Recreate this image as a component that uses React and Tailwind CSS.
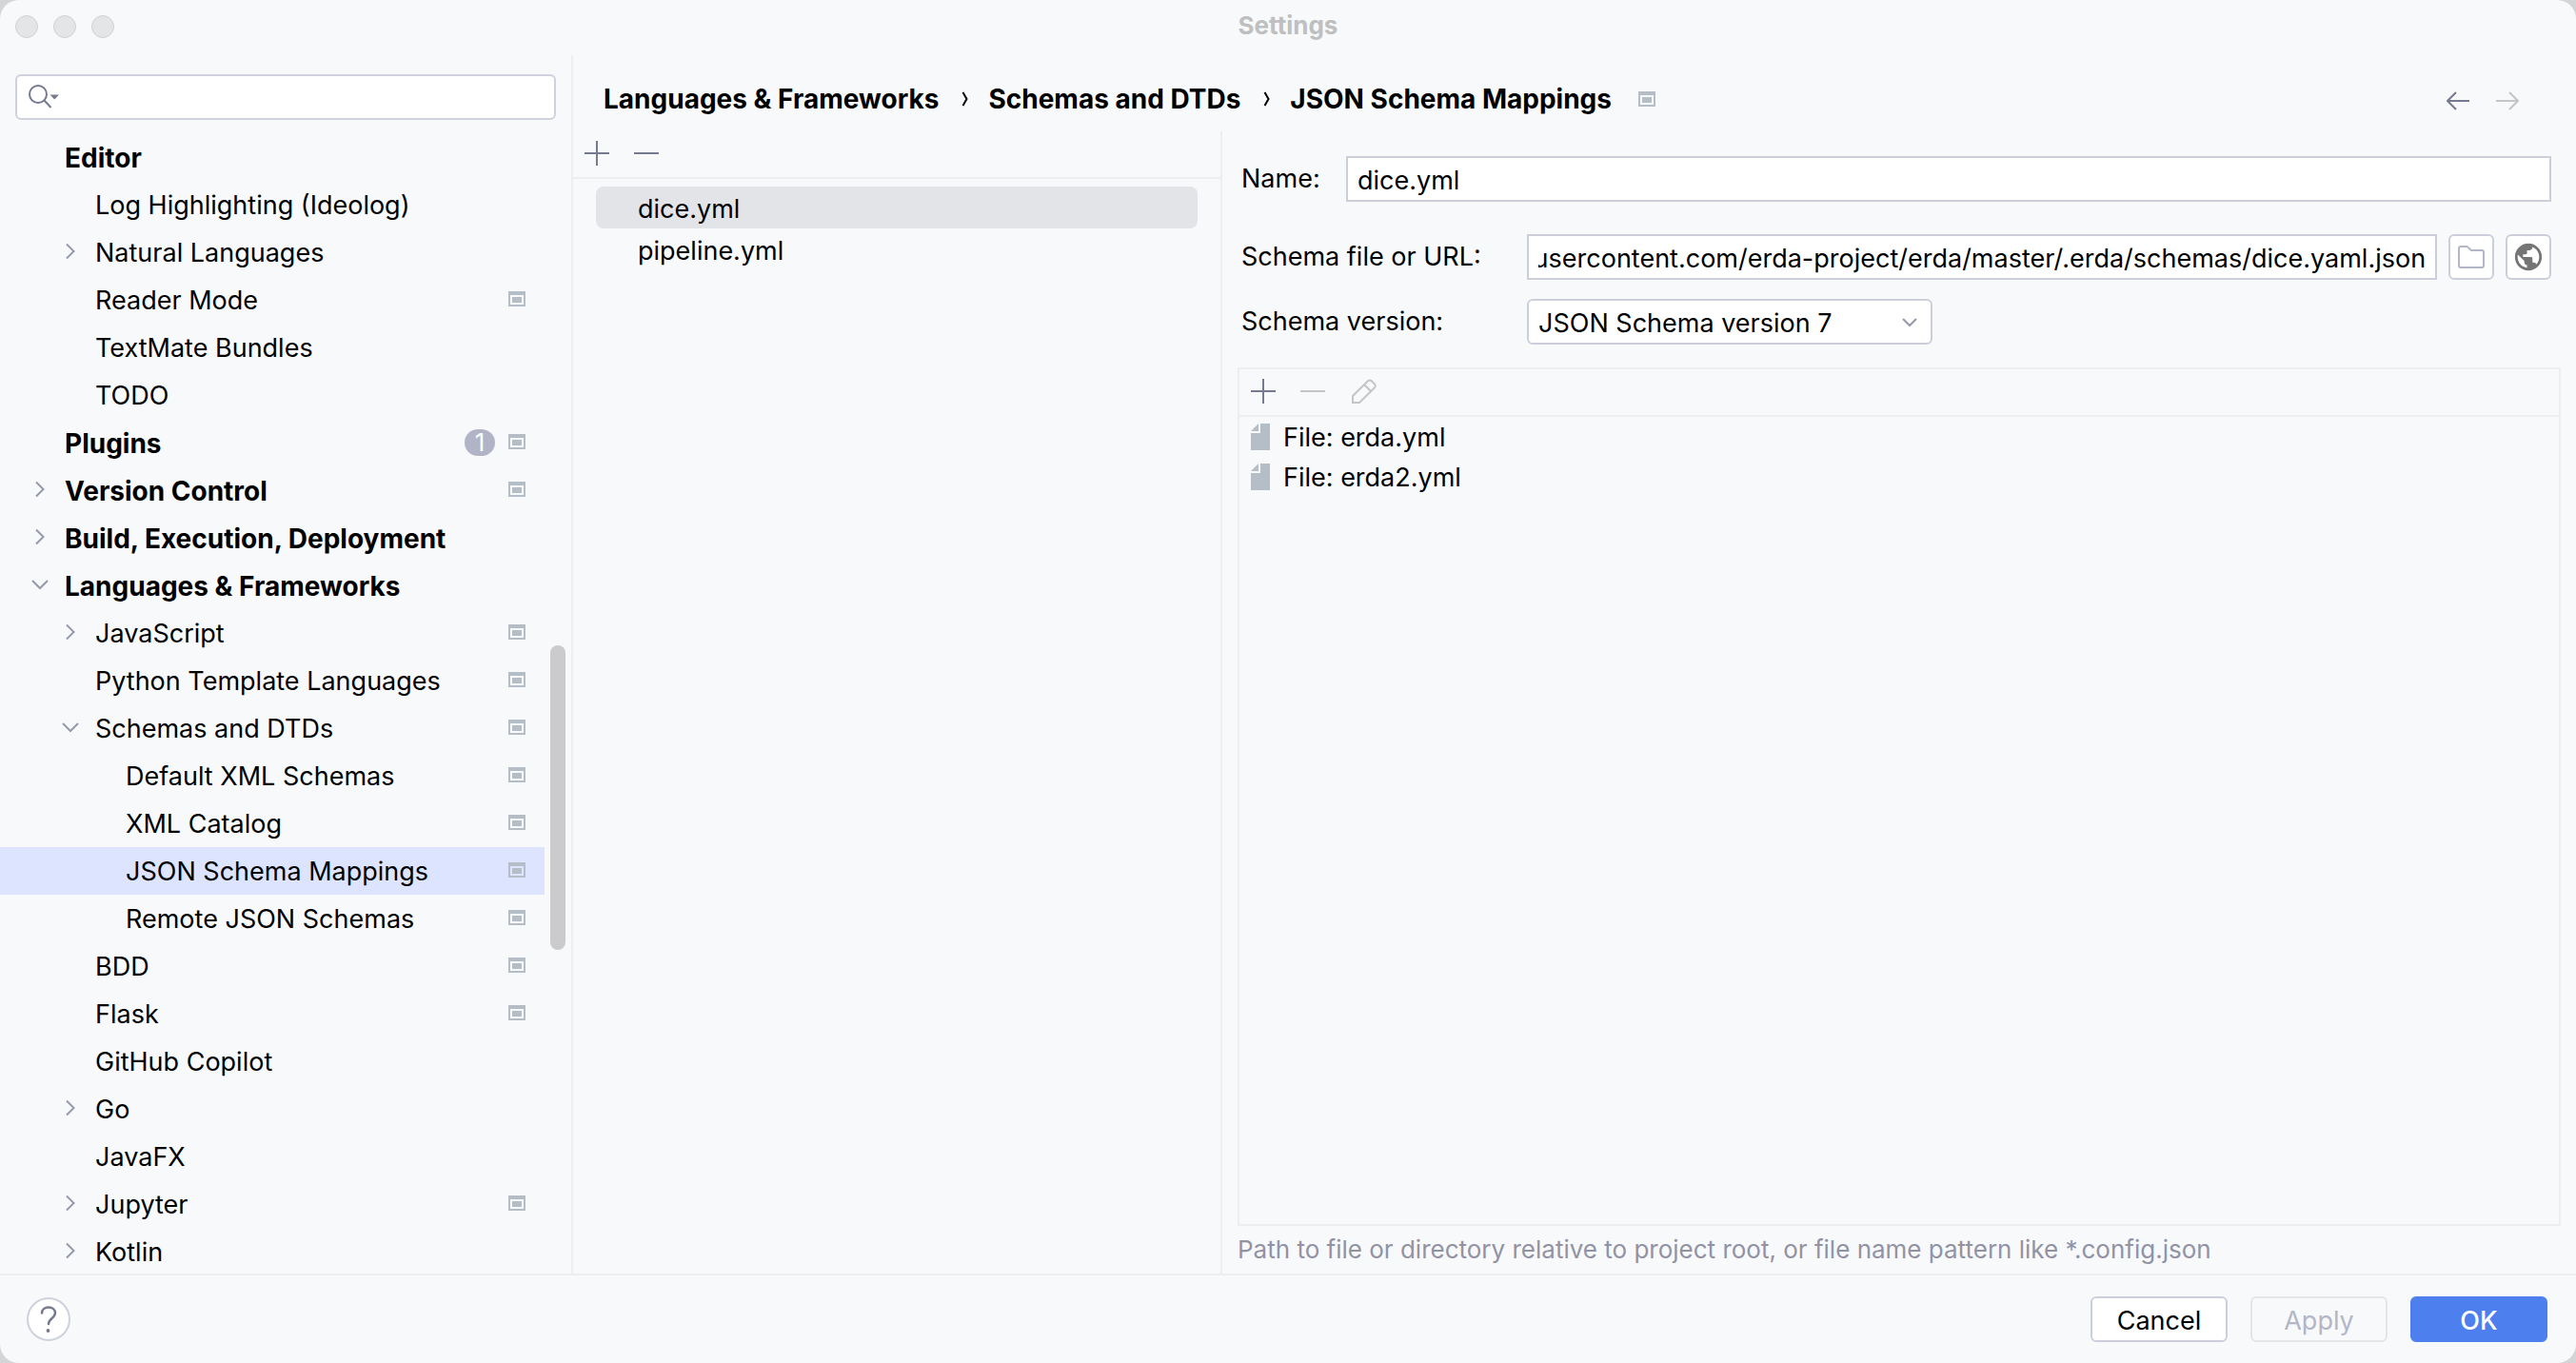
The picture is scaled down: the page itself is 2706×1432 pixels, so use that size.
import React from "react";

const TREE = [
  { label: "Editor", level: 0, bold: true },
  { label: "Log Highlighting (Ideolog)", level: 1 },
  { label: "Natural Languages", level: 1, arrow: "right" },
  { label: "Reader Mode", level: 1, project: true },
  { label: "TextMate Bundles", level: 1 },
  { label: "TODO", level: 1 },
  { label: "Plugins", level: 0, bold: true, badge: "1", project: true },
  { label: "Version Control", level: 0, bold: true, arrow: "right", project: true },
  { label: "Build, Execution, Deployment", level: 0, bold: true, arrow: "right" },
  { label: "Languages & Frameworks", level: 0, bold: true, arrow: "down" },
  { label: "JavaScript", level: 1, arrow: "right", project: true },
  { label: "Python Template Languages", level: 1, project: true },
  { label: "Schemas and DTDs", level: 1, arrow: "down", project: true },
  { label: "Default XML Schemas", level: 2, project: true },
  { label: "XML Catalog", level: 2, project: true },
  { label: "JSON Schema Mappings", level: 2, project: true, selected: true },
  { label: "Remote JSON Schemas", level: 2, project: true },
  { label: "BDD", level: 1, project: true },
  { label: "Flask", level: 1, project: true },
  { label: "GitHub Copilot", level: 1 },
  { label: "Go", level: 1, arrow: "right" },
  { label: "JavaFX", level: 1 },
  { label: "Jupyter", level: 1, arrow: "right", project: true },
  { label: "Kotlin", level: 1, arrow: "right" },
];

const INDENT = ["pl-[26px]", "pl-[58px]", "pl-[90px]"];

function ProjectIcon() {
  return (
    <svg className="h-4 w-[18px] shrink-0" viewBox="0 0 18 16" aria-hidden="true">
      <path fill="#b5bec6" fillRule="evenodd" d="M0 0h18v16H0zM2 4v10h14V4z" />
      <path fill="#b5bec6" d="M4 6h10v6H4z" />
    </svg>
  );
}

function Chevron({ direction }) {
  return (
    <svg className="size-8" viewBox="0 0 32 32" fill="none" stroke="#9699ab" strokeWidth="2" aria-hidden="true">
      {direction === "right" ? <path d="M12 7.5l7.5 7.5-7.5 7.5" /> : <path d="M8 11l8 8 8-8" />}
    </svg>
  );
}

function PlusIcon() {
  return (
    <svg className="size-[26px]" viewBox="0 0 26 26" stroke="#767a90" strokeWidth="2" aria-hidden="true">
      <path d="M13 0v26M0 13h26" />
    </svg>
  );
}

function MinusIcon({ stroke }) {
  return (
    <svg className="size-[26px]" viewBox="0 0 26 26" stroke={stroke} strokeWidth="2" aria-hidden="true">
      <path d="M0 13h26" />
    </svg>
  );
}

function FileIcon() {
  return (
    <svg className="h-7 w-5 shrink-0" viewBox="0 0 20 28" fill="#b5bec6" aria-hidden="true">
      <path d="M10 0h10v28H0V10h10z" />
      <path d="M8 0v8H0z" />
    </svg>
  );
}

function TreeRow({ item }) {
  return (
    <li>
      <button
        type="button"
        className={`flex h-[50px] w-full items-center text-left ${INDENT[item.level]} ${item.selected ? "bg-[#dde4ff]" : ""}`}
      >
        <span className="flex size-8 shrink-0">{item.arrow && <Chevron direction={item.arrow} />}</span>
        <span className={`grow whitespace-nowrap pt-0.5 pl-2.5 ${item.bold ? "text-[28px] font-bold" : ""}`}>{item.label}</span>
        {item.badge && (
          <span className="mr-[14px] flex h-7 w-8 items-center justify-center rounded-full bg-[#b1b4c7] text-[26px] text-white">
            {item.badge}
          </span>
        )}
        <span className="mr-5 flex w-[18px] shrink-0 pb-0.5">{item.project && <ProjectIcon />}</span>
      </button>
    </li>
  );
}

function Sidebar() {
  return (
    <aside className="flex w-[602px] shrink-0 flex-col border-r-2 border-[#edeef0] pt-5">
      <div className="mr-4 ml-4 flex h-12 shrink-0 items-center rounded-md border-2 border-[#cfd1dc] bg-white pl-3">
        <svg className="h-7 w-8 shrink-0" viewBox="0 0 32 28" fill="none" stroke="#767a90" strokeWidth="2" aria-hidden="true">
          <circle cx="10" cy="11" r="9" />
          <path d="M16.5 17.5l7 7.5" />
          <path d="M22.500 11.500h9.500l-4.750 5z" fill="#767a90" stroke="none" />
        </svg>
        <input aria-label="Search settings" className="h-full min-w-0 grow bg-transparent px-2 outline-none" />
      </div>
      <div className="mt-[14px] flex min-h-0 grow">
        <ul className="h-full min-w-0 grow overflow-hidden">
          {TREE.map((item) => (
            <TreeRow key={item.label} item={item} />
          ))}
        </ul>
        <div className="flex w-7 shrink-0 flex-col pl-1.5">
          <div className="grow-[538]" />
          <div className="h-80 w-4 rounded-full bg-[#cbcbcd]" />
          <div className="grow-[340]" />
        </div>
      </div>
    </aside>
  );
}

function CrumbArrow() {
  return (
    <svg className="mr-5 ml-6 h-4 w-2 shrink-0" viewBox="0 0 8 16" fill="none" stroke="#000" strokeWidth="2" aria-hidden="true">
      <path d="M1.500 1l4 7-4 7" />
    </svg>
  );
}

function Header() {
  return (
    <header className="flex h-20 shrink-0 items-center pr-[60px] pl-8 pt-3">
      <nav aria-label="Breadcrumb" className="flex grow items-center whitespace-nowrap text-[28px] font-bold">
        <a href="#languages">Languages &amp; Frameworks</a>
        <CrumbArrow />
        <a href="#schemas">Schemas and DTDs</a>
        <CrumbArrow />
        <span className="mr-7">JSON Schema Mappings</span>
        <ProjectIcon />
      </nav>
      <div className="flex gap-7 pt-1">
        <button type="button" aria-label="Back">
          <svg className="h-5 w-6" viewBox="0 0 24 20" fill="none" stroke="#767a90" strokeWidth="2" aria-hidden="true">
            <path d="M24 10H1.500M10 1l-9 9 9 9" />
          </svg>
        </button>
        <button type="button" aria-label="Forward" disabled>
          <svg className="h-5 w-6" viewBox="0 0 24 20" fill="none" stroke="#c4c5c8" strokeWidth="2" aria-hidden="true">
            <path d="M0 10h22.500M14 1l9 9-9 9" />
          </svg>
        </button>
      </div>
    </header>
  );
}

const TOOLBAR = "flex h-[50px] shrink-0 items-center gap-[26px] border-b-2 border-[#edeef0] pb-0.5 pl-3";

function MappingList() {
  return (
    <section className="flex w-[682px] shrink-0 flex-col border-r-2 border-[#edeef0]">
      <div className={TOOLBAR}>
        <button type="button" aria-label="Add mapping"><PlusIcon /></button>
        <button type="button" aria-label="Remove mapping"><MinusIcon stroke="#767a90" /></button>
      </div>
      <ul className="flex flex-col pt-2 pr-6 pl-6">
        {["dice.yml", "pipeline.yml"].map((name, i) => (
          <li key={name}>
            <button
              type="button"
              className={`flex h-11 w-full items-center rounded-lg pt-1 pl-11 text-left ${i === 0 ? "bg-[#e3e4e8]" : ""}`}
            >
              {name}
            </button>
          </li>
        ))}
      </ul>
    </section>
  );
}

const FIELD = "h-12 min-w-0 grow border-2 border-[#cccfda] bg-white px-2.5 pt-0.5 outline-none";
const ICON_BUTTON = "ml-3 flex size-12 shrink-0 items-center justify-center rounded-md border-2 border-[#cccfda] bg-white";

function MappingForm() {
  const urlRef = React.useRef(null);
  React.useLayoutEffect(() => {
    const scroll = () => {
      if (urlRef.current) urlRef.current.scrollLeft = urlRef.current.scrollWidth;
    };
    scroll();
    document.fonts.ready.then(scroll);
  }, []);

  return (
    <section className="flex min-w-0 grow flex-col pt-[26px] pr-4 pl-4">
      <div className="flex items-center pr-2.5 pl-1">
        <label htmlFor="name" className="w-[110px] shrink-0">Name:</label>
        <input id="name" className={FIELD} defaultValue="dice.yml" />
      </div>
      <div className="mt-[34px] flex items-center pr-2.5 pl-1">
        <label htmlFor="url" className="w-[300px] shrink-0">Schema file or URL:</label>
        <input
          id="url"
          ref={urlRef}
          className={FIELD}
          defaultValue="https://raw.githubusercontent.com/erda-project/erda/master/.erda/schemas/dice.yaml.json"
        />
        <button type="button" aria-label="Browse files" className={ICON_BUTTON}>
          <svg className="size-7" viewBox="0 0 28 28" fill="none" stroke="#b3b6c8" strokeWidth="2" aria-hidden="true">
            <path d="M1 5a2 2 0 0 1 2-2h6.500l4.500 4H25a2 2 0 0 1 2 2V23a2 2 0 0 1-2 2H3a2 2 0 0 1-2-2z" />
          </svg>
        </button>
        <button type="button" aria-label="Open URL" className={ICON_BUTTON}>
          <svg className="size-[34px]" viewBox="0 0 24 24" fill="#757575" aria-hidden="true">
            <path d="M12 2C6.480 2 2 6.480 2 12s4.480 10 10 10 10-4.480 10-10S17.520 2 12 2zm-1 17.930c-3.950-.49-7-3.850-7-7.930 0-.62.080-1.210.21-1.790L9 15v1c0 1.100.9 2 2 2v1.930zm6.900-2.540c-.26-.81-1-1.390-1.900-1.390h-1v-3c0-.55-.45-1-1-1H8v-2h2c.55 0 1-.45 1-1V7h2c1.100 0 2-.9 2-2v-.41c2.930 1.190 5 4.060 5 7.410 0 2.080-.8 3.970-2.100 5.390z" />
          </svg>
        </button>
      </div>
      <div className="mt-5 flex items-center pl-1">
        <label htmlFor="version" className="w-[300px] shrink-0">Schema version:</label>
        <div className="grid w-[426px] items-center">
          <select
            id="version"
            className="col-start-1 row-start-1 h-12 appearance-none rounded-md border-2 border-[#cccfda] bg-white px-2.5 pt-1 outline-none"
          >
            <option>JSON Schema version 7</option>
          </select>
          <svg
            className="pointer-events-none col-start-1 row-start-1 mr-4 h-3 w-4 justify-self-end"
            viewBox="0 0 16 12"
            fill="none"
            stroke="#9699ab"
            strokeWidth="2"
            aria-hidden="true"
          >
            <path d="M1 3l7 7 7-7" />
          </svg>
        </div>
      </div>
      <div className="mt-6 flex grow flex-col border-2 border-[#edeef0]">
        <div className={TOOLBAR}>
          <button type="button" aria-label="Add file"><PlusIcon /></button>
          <button type="button" aria-label="Remove file" disabled><MinusIcon stroke="#c4c5c8" /></button>
          <button type="button" aria-label="Edit file" disabled>
            <svg className="h-[26px] w-7" viewBox="-2 0 28 26" fill="none" stroke="#c4c5c8" strokeWidth="2" aria-hidden="true">
              <path d="M1 18L17 2.200a2.600 2.600 0 0 1 3.700 0l3.300 3.300a2.600 2.600 0 0 1 0 3.700L8 25H1z" />
              <path d="M13 6l7 7" />
            </svg>
          </button>
        </div>
        <ul>
          {["File: erda.yml", "File: erda2.yml"].map((name) => (
            <li key={name} className="flex h-[42px] items-center pl-3">
              <FileIcon />
              <span className="pt-0.5 pl-[14px]">{name}</span>
            </li>
          ))}
        </ul>
      </div>
      <p className="flex h-[50px] shrink-0 items-center text-[26px] text-[#9193a5]">
        Path to file or directory relative to project root, or file name pattern like *.config.json
      </p>
    </section>
  );
}

const BUTTON = "flex h-12 w-36 items-center justify-center rounded-md border-2 pt-1";

function Footer() {
  return (
    <footer className="flex h-[94px] shrink-0 items-center border-t-2 border-[#edeef0] pr-[30px] pl-7">
      <button type="button" aria-label="Help" className="flex size-[46px] items-center justify-center rounded-full border-2 border-[#cfd1dc] bg-white">
        <svg className="h-7 w-[18px]" viewBox="0 0 18 28" fill="none" stroke="#767a90" strokeWidth="2.500" strokeLinecap="round" aria-hidden="true">
          <path d="M2 7.500C2 4 5 1.500 9 1.500s7 2.500 7 6c0 5-7 6-7 11.500" />
          <circle cx="8.500" cy="26" r="1.900" fill="#767a90" stroke="none" />
        </svg>
      </button>
      <div className="flex grow justify-end gap-6">
        <button type="button" className={`${BUTTON} border-[#cccfda] bg-white`}>Cancel</button>
        <button type="button" disabled className={`${BUTTON} border-[#e4e5e8] text-[#b3b6c6]`}>Apply</button>
        <button type="button" className={`${BUTTON} border-[#4d80ee] bg-[#4d80ee] font-medium text-white`}>OK</button>
      </div>
    </footer>
  );
}

export default function App() {
  return (
    <div className="h-screen bg-[#d4d5d6]">
      <div className="flex h-full flex-col overflow-hidden rounded-[20px] bg-[#f8f9fb] font-['Inter',sans-serif] text-[27px] leading-9 text-black">
        <div className="mb-0.5 grid h-14 shrink-0 grid-cols-3 items-center px-4">
          <div className="flex gap-4">
            {["Close", "Minimize", "Zoom"].map((name) => (
              <button key={name} type="button" aria-label={name} className="size-6 rounded-full border border-[#cfd0d1] bg-[#e4e5e6]" />
            ))}
          </div>
          <h1 className="pb-0.5 text-center text-[26px] font-bold text-[#bebfc1]">Settings</h1>
        </div>
        <div className="flex min-h-0 grow">
          <Sidebar />
          <main className="flex min-w-0 grow flex-col">
            <Header />
            <div className="flex min-h-0 grow">
              <MappingList />
              <MappingForm />
            </div>
          </main>
        </div>
        <Footer />
      </div>
    </div>
  );
}
